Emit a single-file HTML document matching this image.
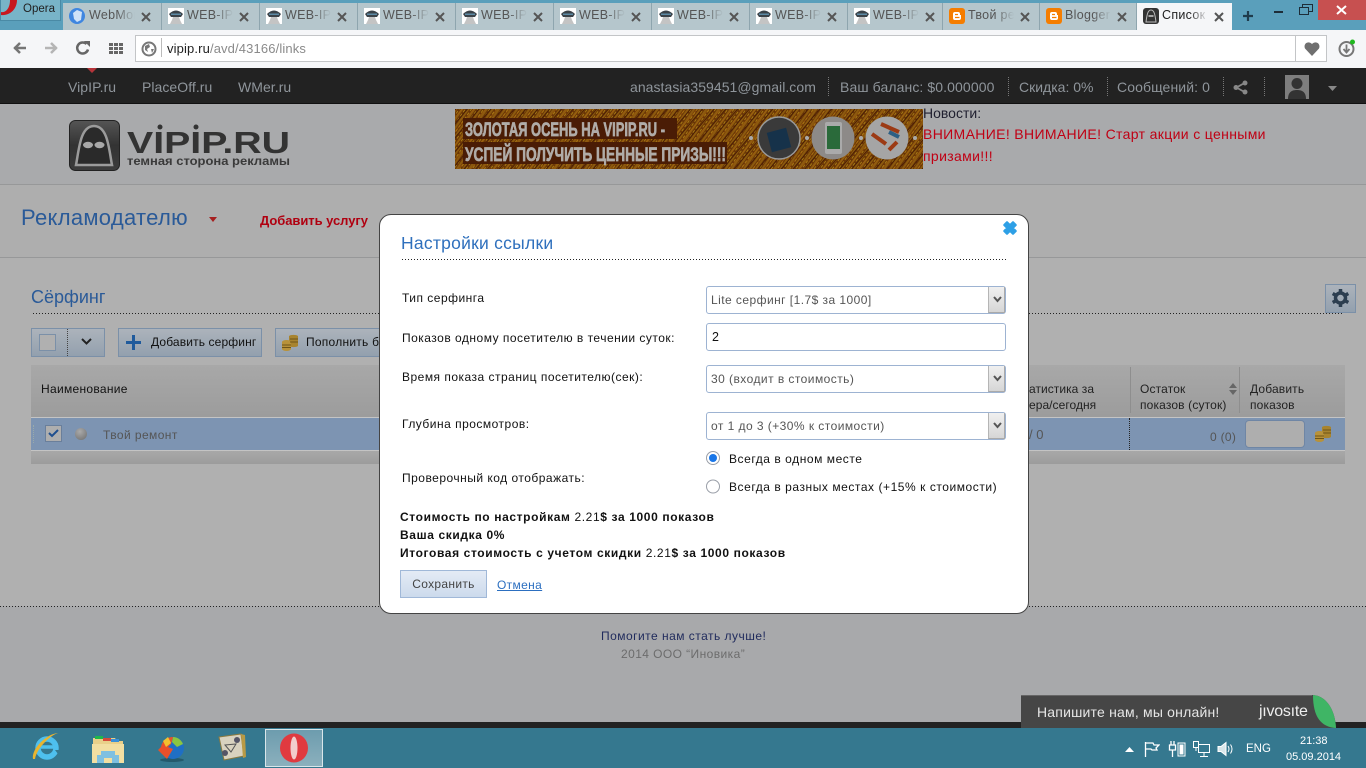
<!DOCTYPE html>
<html lang="ru"><head><meta charset="utf-8"><title>Список ссылок</title>
<style>
*{box-sizing:border-box}
html,body{margin:0;padding:0;width:1366px;height:768px;overflow:hidden;background:#b0b0b0;font-family:"Liberation Sans","Noto Sans CJK SC",sans-serif;font-size:12px;color:#000}
.a{position:absolute;white-space:nowrap}
.tab{position:absolute;top:3px;height:27px;background:#b5c6cc;border-right:1px solid #8ea5ae;overflow:hidden}
.tab .t{position:absolute;left:25px;top:5px;font-size:12.5px;color:#555;letter-spacing:.3px;white-space:nowrap;width:46px;overflow:hidden;-webkit-mask-image:linear-gradient(90deg,#000 60%,transparent);mask-image:linear-gradient(90deg,#000 60%,transparent)}
.tab .x{position:absolute;left:77px;top:9px}
.tab svg.i{position:absolute;left:6px;top:5px}
.nav{font-size:14px;color:#8f959b;top:79px;letter-spacing:.05px}
.sel{position:absolute;left:706px;width:300px;height:28px;background:#fff;border:1px solid #9db3d2;border-radius:3px;font-size:12px;color:#555;padding:6px 0 0 4px;letter-spacing:.45px;white-space:nowrap}
.sel i{position:absolute;right:0;top:0;width:17px;height:26px;background:linear-gradient(#f0f0f0,#d6d6d6);border-left:1px solid #b5b5b5;border-right:1px solid #aaa;border-bottom:1px solid #aaa}
.sel svg{position:absolute;right:3px;top:9px}
.lab{font-size:12px;letter-spacing:.49px;color:#111}
.b{font-size:12px;font-weight:bold;letter-spacing:.62px;color:#111}
.b span{font-weight:normal}
.sep{position:absolute;top:77px;height:19px;border-left:1px dotted #777}
.dot{position:absolute;height:1px;background:repeating-linear-gradient(90deg,#222 0 1px,transparent 1px 3px)}
</style></head><body>

<svg width="0" height="0" style="position:absolute">
<symbol id="web" viewBox="0 0 16 16"><rect width="16" height="16" fill="#fff"/><path d="M1 6Q8 -1 15 6L13 9H3Z" fill="#3a4248"/><path d="M3 5.500h10v1.500H3z" fill="#5d8aa5"/><path d="M5 9h6l1 3 2 4H2l2-4z" fill="#c4c4c4"/></symbol>
<symbol id="xx" viewBox="0 0 10 10"><path d="M1 1l8 8M9 1l-8 8" stroke="#555" stroke-width="2"/></symbol>
<symbol id="blg" viewBox="0 0 16 16"><rect width="16" height="16" rx="3" fill="#f57d00"/><path d="M4 6a2 2 0 0 1 2-2h3a2 2 0 0 1 2 2v1h1v3a2 2 0 0 1-2 2H6a2 2 0 0 1-2-2z" fill="#fff"/><path d="M6 6.500h3M6 9.500h4.500" stroke="#f57d00" stroke-width="1.200"/></symbol>
<symbol id="arr" viewBox="0 0 9 7"><path d="M1 1l3.500 4L8 1" fill="none" stroke="#555" stroke-width="2"/></symbol>
<symbol id="coin" viewBox="0 0 17 17"><path d="M7 2a5 2 0 0 1 9 0v10a5 2 0 0 1-9 0z" fill="#a8842f"/><path d="M0 8a4.500 2 0 0 1 9 0v7a4.500 2 0 0 1-9 0z" fill="#b8923a"/><path d="M8 5h8M8 8h8M0 11h9M0 13.500h9" stroke="#6e5418"/></symbol>
</svg>

<!-- browser chrome -->
<div class="a" style="left:0;top:0;width:1366px;height:30px;background:#5a9fbb"></div>
<div class="a" style="left:0;top:0;width:61px;height:21px;background:#78b4c8;border:1px solid #4a8aa5;border-top:0"></div>
<svg class="a" style="left:0;top:0" width="18" height="16"><path d="M1 12C6 13 10 8 10 0H17C17 9 10 16 1 15Z" fill="#c8171e"/></svg>
<div class="a" style="left:23px;top:3px;font-size:11.5px;color:#222">Opera</div>

<div class="tab" style="left:63px;width:99px">
<svg class="i" width="16" height="16"><circle cx="8" cy="8" r="8" fill="#3f86e0"/><path d="M8 2l5 2-1 8-4 2-3-3-1-6z" fill="#cfe2f8"/></svg><div class="t" style="left:26px">WebMoney</div>
<svg class="x" width="10" height="10" style="left:78px"><use href="#xx"/></svg></div>
<div class="tab" style="left:162px;width:98px"><svg class="i" width="16" height="16"><use href="#web"/></svg><div class="t">WEB-IP.ru</div><svg class="x" width="10" height="10"><use href="#xx"/></svg></div>
<div class="tab" style="left:260px;width:98px"><svg class="i" width="16" height="16"><use href="#web"/></svg><div class="t">WEB-IP.ru</div><svg class="x" width="10" height="10"><use href="#xx"/></svg></div>
<div class="tab" style="left:358px;width:98px"><svg class="i" width="16" height="16"><use href="#web"/></svg><div class="t">WEB-IP.ru</div><svg class="x" width="10" height="10"><use href="#xx"/></svg></div>
<div class="tab" style="left:456px;width:98px"><svg class="i" width="16" height="16"><use href="#web"/></svg><div class="t">WEB-IP.ru</div><svg class="x" width="10" height="10"><use href="#xx"/></svg></div>
<div class="tab" style="left:554px;width:98px"><svg class="i" width="16" height="16"><use href="#web"/></svg><div class="t">WEB-IP.ru</div><svg class="x" width="10" height="10"><use href="#xx"/></svg></div>
<div class="tab" style="left:652px;width:98px"><svg class="i" width="16" height="16"><use href="#web"/></svg><div class="t">WEB-IP.ru</div><svg class="x" width="10" height="10"><use href="#xx"/></svg></div>
<div class="tab" style="left:750px;width:98px"><svg class="i" width="16" height="16"><use href="#web"/></svg><div class="t">WEB-IP.ru</div><svg class="x" width="10" height="10"><use href="#xx"/></svg></div>
<div class="tab" style="left:848px;width:95px"><svg class="i" width="16" height="16"><use href="#web"/></svg><div class="t">WEB-IP.ru</div><svg class="x" width="10" height="10"><use href="#xx"/></svg></div>
<div class="tab" style="left:943px;width:97px"><svg class="i" width="16" height="16"><use href="#blg"/></svg><div class="t">Твой ремонт</div><svg class="x" width="10" height="10"><use href="#xx"/></svg></div>
<div class="tab" style="left:1040px;width:97px"><svg class="i" width="16" height="16"><use href="#blg"/></svg><div class="t">Blogger</div><svg class="x" width="10" height="10"><use href="#xx"/></svg></div>
<div class="tab" style="left:1137px;width:95px;background:#f5f6f8;border:0"><svg class="i" width="16" height="16"><rect width="16" height="16" rx="3" fill="#333"/><path d="M3 14C4 6 5 2 8 2s4 4 5 12z" fill="none" stroke="#bbb"/><path d="M5.500 8h5" stroke="#ccc" stroke-width="1.500"/></svg><div class="t" style="color:#222">Список</div><svg class="x" width="10" height="10"><use href="#xx"/></svg></div>
<svg class="a" style="left:1241px;top:9px" width="14" height="14"><path d="M7 2v10M2 7h10" stroke="#1f3c4c" stroke-width="2.200"/></svg>
<div class="a" style="left:1274px;top:11px;width:9px;height:2px;background:#1d2d38"></div>
<svg class="a" style="left:1299px;top:4px" width="14" height="11"><path d="M0.500 3.500h9v7h-9zM3.500 3.500V0.500h10v7h-4" fill="none" stroke="#1d2d38" stroke-width="1"/></svg>
<div class="a" style="left:1318px;top:0;width:48px;height:20px;background:#c75050"></div>
<svg class="a" style="left:1336px;top:5px" width="11" height="10"><path d="M1 1l9 8M10 1l-9 8" stroke="#fff" stroke-width="2"/></svg>

<div class="a" style="left:0;top:30px;width:1366px;height:38px;background:#f5f6f8"></div>
<svg class="a" style="left:12px;top:40px" width="16" height="16"><path d="M2 8h12M8 3L3 8l5 5" fill="none" stroke="#757575" stroke-width="2.500"/></svg>
<svg class="a" style="left:43px;top:40px" width="16" height="16"><path d="M2 8h12M8 3l5 5-5 5" fill="none" stroke="#b5b5b5" stroke-width="2.500"/></svg>
<svg class="a" style="left:75px;top:40px" width="16" height="16"><path d="M13 9.500A5.500 5.500 0 1 1 11.500 4" fill="none" stroke="#666" stroke-width="2.500"/><path d="M9 1h6v6z" fill="#666"/></svg>
<svg class="a" style="left:109px;top:43px" width="14" height="11" fill="#666"><rect width="4" height="3"/><rect x="5" width="4" height="3"/><rect x="10" width="4" height="3"/><rect y="4" width="4" height="3"/><rect x="5" y="4" width="4" height="3"/><rect x="10" y="4" width="4" height="3"/><rect y="8" width="4" height="3"/><rect x="5" y="8" width="4" height="3"/><rect x="10" y="8" width="4" height="3"/></svg>
<div class="a" style="left:135px;top:35px;width:1192px;height:27px;background:#fff;border:1px solid #c3c5c7"></div>
<div class="a" style="left:1295px;top:36px;height:25px;border-left:1px solid #c3c5c7"></div>
<svg class="a" style="left:141px;top:41px" width="16" height="16"><circle cx="8" cy="8" r="6.500" fill="none" stroke="#777" stroke-width="2"/><path d="M4 5l4-2 1 3-3 2 1 3-3-2zM10 8h3l-2 4z" fill="#777"/></svg>
<div class="a" style="left:161px;top:38px;height:19px;border-left:1px solid #bbb"></div>
<div class="a" style="left:167px;top:41px;font-size:13px;letter-spacing:.13px;color:#8a8a8a"><span style="color:#222">vipip.ru</span>/avd/43166/links</div>
<svg class="a" style="left:1304px;top:41px" width="16" height="15"><path d="M8 15L1 7.500C-1 3 4-1 8 3c4-4 9 0 7 4.500z" fill="#6f6f6f"/></svg>
<svg class="a" style="left:1337px;top:39px" width="20" height="19"><circle cx="9.500" cy="10" r="7" fill="none" stroke="#777" stroke-width="2"/><path d="M9.500 5.500v7M6.500 10l3 3.500 3-3.500" fill="none" stroke="#777" stroke-width="1.800"/><circle cx="15.500" cy="3" r="2.500" fill="#1fb81f"/></svg>

<!-- top dark nav -->
<div class="a" style="left:0;top:68px;width:1366px;height:36px;background:#222;border-bottom:1px solid #111"></div>
<svg class="a" style="left:87px;top:68px" width="10" height="5"><path d="M0 0h10L5 5z" fill="#b5343a"/></svg>
<div class="a nav" style="left:68px">VipIP.ru</div>
<div class="a nav" style="left:142px">PlaceOff.ru</div>
<div class="a nav" style="left:238px">WMer.ru</div>
<div class="a nav" style="left:630px">anastasia359451@gmail.com</div>
<div class="a nav" style="left:840px;letter-spacing:.1px">Ваш баланс: $0.000000</div>
<div class="a nav" style="left:1019px;letter-spacing:0">Скидка: 0%</div>
<div class="a nav" style="left:1117px;letter-spacing:.1px">Сообщений: 0</div>
<div class="sep" style="left:828px"></div><div class="sep" style="left:1008px"></div><div class="sep" style="left:1107px"></div><div class="sep" style="left:1223px"></div><div class="sep" style="left:1264px"></div>
<svg class="a" style="left:1233px;top:80px" width="15" height="15"><path d="M11.500 3L3.500 7.500l8 4.500" fill="none" stroke="#888" stroke-width="1.800"/><circle cx="12" cy="3" r="2.500" fill="#888"/><circle cx="3" cy="7.500" r="2.500" fill="#888"/><circle cx="12" cy="12" r="2.500" fill="#888"/></svg>
<svg class="a" style="left:1285px;top:75px" width="24" height="24"><rect width="24" height="24" fill="#7e7e7e"/><circle cx="12" cy="8.500" r="5.500" fill="#333"/><path d="M3 24c0-7 4-9 9-9s9 2 9 9z" fill="#333"/></svg>
<svg class="a" style="left:1328px;top:86px" width="9" height="5"><path d="M0 0h9L4.500 5z" fill="#888"/></svg>

<!-- page -->
<div class="a" style="left:0;top:104px;width:1366px;height:81px;background:#a9aaac;border-bottom:1px solid #979899"></div>
<div class="a" style="left:0;top:185px;width:1366px;height:73px;background:#aeaeae;border-bottom:1px solid #979899"></div>
<div class="a" style="left:0;top:258px;width:1366px;height:348px;background:#b0b0b0"></div>
<div class="a" style="left:0;top:606px;width:1366px;height:116px;background:#a8a9ab"></div>
<div class="dot" style="left:0;top:606px;width:1366px"></div>

<svg class="a" style="left:68px;top:120px" width="224" height="52" viewBox="0 0 224 52">
<defs><linearGradient id="lg" x1="0" y1="0" x2="0" y2="1"><stop offset="0" stop-color="#555"/><stop offset=".5" stop-color="#333"/><stop offset="1" stop-color="#3c3c3c"/></linearGradient></defs>
<rect x="1.500" y="0.500" width="50" height="50" rx="6" fill="url(#lg)" stroke="#222"/>
<path d="M8 45C11 30 12 6 26 6s15 24 18 39z" fill="#2a2a2a" stroke="#9b9b9b" stroke-width="2.500"/>
<ellipse cx="20" cy="25" rx="5" ry="3.200" fill="#a8a8a8"/><ellipse cx="31.500" cy="25" rx="5" ry="3.200" fill="#a8a8a8"/>
<text x="59" y="33" font-family="Liberation Sans" font-weight="bold" font-size="31" fill="#333" textLength="163" lengthAdjust="spacingAndGlyphs">VIPIP.RU</text>
<circle cx="92" cy="7" r="2.500" fill="#333"/><circle cx="128" cy="7" r="2.500" fill="#333"/>
<text x="59" y="45" font-family="Liberation Sans" font-weight="bold" font-size="11.500" fill="#3a3a3a" textLength="163" lengthAdjust="spacingAndGlyphs">темная сторона рекламы</text>
</svg>

<svg class="a" style="left:455px;top:109px" width="468" height="60" viewBox="0 0 468 60">
<defs><pattern id="p" width="5" height="5" patternUnits="userSpaceOnUse" patternTransform="rotate(35)"><rect width="5" height="5" fill="#6a3506"/><rect width="2" height="5" fill="#8c5a0e"/><rect x="3" y="0" width="1" height="3" fill="#a67c14"/></pattern>
<pattern id="q" width="9" height="9" patternUnits="userSpaceOnUse" patternTransform="rotate(-50)"><rect width="9" height="1" fill="#4a1d04"/><rect y="5" width="9" height="1" fill="#a8650f" opacity=".6"/></pattern></defs>
<rect width="468" height="60" fill="url(#p)"/><rect width="468" height="60" fill="url(#q)"/>
<rect x="8" y="9" width="214" height="21" fill="#4a1c05"/><rect x="8" y="33" width="264" height="22" fill="#4a1c05"/>
<g font-family="Liberation Sans" font-weight="bold" fill="#b0aca8" stroke="#b0aca8" stroke-width=".7" font-size="19">
<text x="10" y="27" textLength="200" lengthAdjust="spacingAndGlyphs">ЗОЛОТАЯ ОСЕНЬ НА VIPIP.RU -</text>
<text x="10" y="52" textLength="261" lengthAdjust="spacingAndGlyphs">УСПЕЙ ПОЛУЧИТЬ ЦЕННЫЕ ПРИЗЫ!!!</text></g>
<circle cx="296" cy="29" r="2" fill="#aaa"/><circle cx="352" cy="29" r="2" fill="#aaa"/><circle cx="406" cy="29" r="2" fill="#aaa"/><circle cx="460" cy="29" r="2" fill="#aaa"/>
<circle cx="324" cy="29" r="21" fill="#3a3a3a" stroke="#999" stroke-width="1.500"/><rect x="314" y="21" width="20" height="20" fill="#16324a" transform="rotate(-15 324 31)"/>
<circle cx="378" cy="29" r="21.500" fill="#8d8a88"/><rect x="370" y="13" width="17" height="32" rx="2" fill="#aaa"/><rect x="372" y="17" width="13" height="23" fill="#2a6a3a"/>
<circle cx="432" cy="29" r="21.500" fill="#a5a5a5"/><path d="M417 25l14 10M426 15l18 8M442 33l-8 8" stroke="#9c3a14" stroke-width="4"/><path d="M434 23l10 5" stroke="#2d5f84" stroke-width="4"/>
</svg>

<div class="a" style="left:923px;top:105px;font-size:14px;color:#1f1f2f">Новости:</div>
<div class="a" style="left:923px;top:123px;font-size:14px;line-height:22px;letter-spacing:.35px;color:#c00014;white-space:normal;width:350px">ВНИМАНИЕ! ВНИМАНИЕ! Старт акции с ценными призами!!!</div>

<div class="a" style="left:21px;top:205px;font-size:22px;letter-spacing:.3px;color:#2a5a98">Рекламодателю</div>
<svg class="a" style="left:209px;top:217px" width="8" height="5"><path d="M0 0h8L4 5z" fill="#a62020"/></svg>
<div class="a" style="left:260px;top:213px;font-size:13px;font-weight:bold;letter-spacing:-.05px;color:#b00010">Добавить услугу</div>

<div class="a" style="left:31px;top:287px;font-size:18px;color:#2a5a98">Сёрфинг</div>
<div class="dot" style="left:33px;top:313px;width:1310px"></div>

<div class="a" style="left:31px;top:328px;width:74px;height:29px;background:linear-gradient(#acb3bb,#93a0ae);border:1px solid #7b90a8"></div>
<div class="a" style="left:39px;top:334px;width:17px;height:17px;background:#b0b0b0;border:1px solid #7b90a8"></div>
<div class="a" style="left:67px;top:329px;height:27px;border-left:1px dotted #444"></div>
<svg class="a" style="left:81px;top:338px" width="11" height="8"><path d="M1 1l4.500 4.500L10 1" fill="none" stroke="#222" stroke-width="2"/></svg>
<div class="a" style="left:118px;top:328px;width:144px;height:29px;background:linear-gradient(#acb3bb,#93a0ae);border:1px solid #7b90a8"></div>
<svg class="a" style="left:126px;top:335px" width="15" height="15"><path d="M7.500 0v15M0 7.500h15" stroke="#1f5a9c" stroke-width="3"/></svg>
<div class="a" style="left:151px;top:335px;color:#111;letter-spacing:.13px">Добавить серфинг</div>
<div class="a" style="left:275px;top:328px;width:110px;height:29px;background:linear-gradient(#acb3bb,#93a0ae);border:1px solid #7b90a8"></div>
<svg class="a" style="left:282px;top:334px" width="17" height="17"><use href="#coin"/></svg>
<div class="a" style="left:306px;top:335px;color:#111;letter-spacing:.25px">Пополнить б</div>

<div class="a" style="left:1325px;top:284px;width:31px;height:29px;background:linear-gradient(#acb3bb,#93a0ae);border:1px solid #7b90a8"></div>
<svg class="a" style="left:1332px;top:289px" width="17" height="18" viewBox="0 0 17 18"><circle cx="8.500" cy="9" r="5" fill="none" stroke="#2c3e50" stroke-width="3.500"/><path d="M8.500 0v4M8.500 14v4M0.700 4.500l3.500 2M12.800 11.500l3.500 2M0.700 13.500l3.500-2M12.800 6.500l3.500-2" stroke="#2c3e50" stroke-width="3.500"/></svg>

<div class="a" style="left:31px;top:365px;width:1314px;height:53px;background:linear-gradient(#a8a8a8,#9c9c9c);border-bottom:1px solid #c4c4c4"></div>
<div class="a" style="left:41px;top:382px;color:#111;letter-spacing:.3px">Наименование</div>
<div class="a" style="left:1029px;top:381px;color:#222;line-height:16px;letter-spacing:.05px">атистика за<br>ера/сегодня</div>
<div class="a" style="left:1130px;top:367px;height:46px;border-left:1px solid #8e8e8e"></div>
<div class="a" style="left:1239px;top:367px;height:46px;border-left:1px solid #8e8e8e"></div>
<div class="a" style="left:1140px;top:381px;color:#222;line-height:16px;letter-spacing:.15px">Остаток<br>показов (суток)</div>
<svg class="a" style="left:1229px;top:382px" width="8" height="14"><path d="M0 6l4-5 4 5zM0 8h8l-4 5z" fill="#666"/></svg>
<div class="a" style="left:1250px;top:381px;color:#222;line-height:16px;letter-spacing:.15px">Добавить<br>показов</div>

<div class="a" style="left:31px;top:418px;width:1314px;height:33px;background:#7d94b2;border-bottom:1px solid #c4c4c4"></div>
<div class="a" style="left:33px;top:425px;width:3px;height:18px;border-left:1px dotted #9aa;"></div>
<div class="a" style="left:45px;top:425px;width:17px;height:17px;background:#aeaeae;border:1px solid #6a7f9b"></div>
<svg class="a" style="left:48px;top:429px" width="11" height="9"><path d="M1 4l3 3 6-6" fill="none" stroke="#1f4f8f" stroke-width="2"/></svg>
<div class="a" style="left:75px;top:428px;width:12px;height:12px;border-radius:50%;background:radial-gradient(circle at 40% 30%,#aaa,#6d6d6d)"></div>
<div class="a" style="left:103px;top:428px;color:#555;letter-spacing:.42px">Твой ремонт</div>
<div class="a" style="left:1029px;top:427px;font-size:13px;color:#555">/ 0</div>
<div class="a" style="left:1129px;top:418px;height:32px;border-left:1px dotted #222"></div>
<div class="a" style="left:1210px;top:430px;color:#555;letter-spacing:.3px">0 (0)</div>
<div class="a" style="left:1245px;top:420px;width:60px;height:28px;background:#aeaeae;border:1px solid #6f86a5;border-radius:4px"></div>
<svg class="a" style="left:1315px;top:425px" width="17" height="17"><use href="#coin"/></svg>
<div class="a" style="left:31px;top:451px;width:1314px;height:13px;background:linear-gradient(#a8a8a8,#9c9c9c)"></div>

<!-- footer -->
<div class="a" style="left:601px;top:629px;letter-spacing:.48px;color:#1f2a5c">Помогите нам стать лучше!</div>
<div class="a" style="left:621px;top:647px;letter-spacing:.42px;color:#6c6c6c">2014 ООО “Иновика”</div>

<!-- modal -->
<div class="a" style="left:379px;top:214px;width:650px;height:400px;background:#fff;border:1px solid #444;border-radius:12px"></div>
<svg class="a" style="left:1002px;top:220px" width="16" height="16"><path d="M2.500 5L5 2.500 8 5.500l3-3L13.500 5 10.500 8l3 3L11 13.500l-3-3-3 3L2.500 11l3-3z" fill="#2ea0e6" stroke="#2ea0e6" stroke-width="2.500" stroke-linejoin="round"/></svg>
<div class="a" style="left:401px;top:233px;font-size:17.500px;letter-spacing:.25px;color:#2f70bd">Настройки ссылки</div>
<div class="dot" style="left:402px;top:259px;width:606px"></div>
<div class="a lab" style="left:402px;top:291px">Тип серфинга</div>
<div class="a lab" style="left:402px;top:331px">Показов одному посетителю в течении суток:</div>
<div class="a lab" style="left:402px;top:370px">Время показа страниц посетителю(сек):</div>
<div class="a lab" style="left:402px;top:417px">Глубина просмотров:</div>
<div class="a lab" style="left:402px;top:471px">Проверочный код отображать:</div>

<div class="sel" style="top:286px">Lite серфинг [1.7$ за 1000]<i></i><svg width="9" height="7"><use href="#arr"/></svg></div>
<div class="sel" style="top:323px;color:#111;font-size:12.500px;padding-left:5px">2</div>
<div class="sel" style="top:365px">30 (входит в стоимость)<i></i><svg width="9" height="7"><use href="#arr"/></svg></div>
<div class="sel" style="top:412px">от 1 до 3 (+30% к стоимости)<i></i><svg width="9" height="7"><use href="#arr"/></svg></div>

<svg class="a" style="left:705px;top:450px" width="16" height="44"><circle cx="8" cy="8" r="6.500" fill="#fff" stroke="#9a9fa8"/><circle cx="8" cy="8" r="4" fill="#1976e8"/><circle cx="8" cy="36.500" r="6.500" fill="#fff" stroke="#9a9fa8"/></svg>
<div class="a lab" style="left:729px;top:452px;letter-spacing:.55px">Всегда в одном месте</div>
<div class="a lab" style="left:729px;top:480px;letter-spacing:.55px">Всегда в разных местах (+15% к стоимости)</div>

<div class="a b" style="left:400px;top:510px">Стоимость по настройкам <span>2.21</span>$ за 1000 показов</div>
<div class="a b" style="left:400px;top:528px">Ваша скидка 0%</div>
<div class="a b" style="left:400px;top:546px">Итоговая стоимость с учетом скидки <span>2.21</span>$ за 1000 показов</div>
<div class="a" style="left:400px;top:570px;width:87px;height:28px;background:linear-gradient(#e4ebf5,#ccdaec);border:1px solid #a0b8d8;color:#444;font-size:12px;text-align:center;line-height:27px;letter-spacing:.32px">Сохранить</div>
<div class="a" style="left:497px;top:578px;color:#2c6fc0;text-decoration:underline;letter-spacing:.35px">Отмена</div>

<!-- taskbar -->
<div class="a" style="left:0;top:722px;width:1366px;height:6px;background:#222"></div>
<div class="a" style="left:0;top:728px;width:1366px;height:40px;background:#35788f"></div>
<svg class="a" style="left:30px;top:731px" width="32" height="32" viewBox="0 0 32 32"><ellipse cx="17" cy="17" rx="9" ry="9" fill="none" stroke="#4ec0ee" stroke-width="5.500"/><path d="M10 16h15" stroke="#4ec0ee" stroke-width="3.500"/><path d="M25 19h6l-3 4z" fill="#35788f"/><path d="M3 28C1 18 17 2 29 2c-6 0-22 14-24 26z" fill="#e8b530"/></svg>
<svg class="a" style="left:91px;top:734px" width="34" height="30" viewBox="0 0 34 30"><path d="M2 4h22l2 3h6v22H2z" fill="#e9d08a"/><rect x="4" y="2" width="8" height="3" fill="#1fb84a"/><rect x="12" y="4" width="8" height="3" fill="#d64a3a"/><rect x="20" y="5" width="8" height="3" fill="#3a90d8"/><rect x="1" y="10" width="32" height="19" fill="#f2dfa2"/><path d="M6 29v-8h4v-4h14v4h4v8h-7v-5h-8v5z" fill="#7fc0e0"/></svg>
<svg class="a" style="left:155px;top:733px" width="32" height="30" viewBox="0 0 32 30"><ellipse cx="17" cy="27" rx="12" ry="2" fill="#245a6c"/><circle cx="18" cy="15" r="11" fill="#1f6fc4"/><path d="M18 4a11 11 0 0 1 10 7l-6 3-5-5z" fill="#8bc53f"/><path d="M6 14C7 8 12 4 18 4l-2 7-3 3 5 2-6 10-9-9z" fill="#e8502a"/><path d="M8 8l5-4 3 6-5 4z" fill="#f2c12e"/></svg>
<svg class="a" style="left:217px;top:732px" width="30" height="30" viewBox="0 0 30 30"><path d="M2 5l22-3 3 22-20 4z" fill="#d8d2bf" stroke="#8a7a40"/><path d="M24 2l4 1 1 22-3 1z" fill="#b89a45"/><path d="M8 13l11-1-5 8z" fill="none" stroke="#555"/><circle cx="20" cy="8" r="3" fill="#556"/><circle cx="8" cy="21" r="3" fill="#556"/></svg>
<div class="a" style="left:265px;top:729px;width:58px;height:38px;background:linear-gradient(#6d9cae,#8bb0bd);border:1px solid #d9e6ea"></div>
<svg class="a" style="left:279px;top:733px" width="30" height="30" viewBox="0 0 30 30"><ellipse cx="15" cy="15" rx="14" ry="14.500" fill="#e03a40"/><ellipse cx="15" cy="15" rx="3.500" ry="11.500" fill="#f2cdcd"/></svg>

<!-- jivosite -->
<div class="a" style="left:1021px;top:695px;width:292px;height:33px;background:#464646;border-top:1px solid #666"></div>
<svg class="a" style="left:1312px;top:695px" width="25" height="33"><path d="M1 0C14 1 23 14 24 33L0 33V0Z" fill="#464646"/><path d="M1 0C14 1 23 14 24 33 9 32 1 22 1 0Z" fill="#3fb565"/></svg>
<div class="a" style="left:1037px;top:704px;font-size:14px;letter-spacing:.2px;color:#e6e6e6">Напишите нам, мы онлайн!</div>
<div class="a" style="left:1259px;top:703px;font-size:16px;letter-spacing:-.25px;color:#eee">jıvosıte</div>

<!-- tray -->
<svg class="a" style="left:1125px;top:747px" width="9" height="5"><path d="M0 5L4.500 0 9 5z" fill="#fff"/></svg>
<svg class="a" style="left:1144px;top:741px" width="16" height="16"><path d="M1.500 1v15M2 2h7l1 2h5l-3 3 1 2H8L7 8H2" fill="none" stroke="#fff" stroke-width="1.300"/></svg>
<svg class="a" style="left:1168px;top:741px" width="18" height="16"><path d="M3 0v4M6 0v4M1.500 4h6v5h-6zM4.500 9v7" stroke="#fff" stroke-width="1.300" fill="none"/><rect x="10" y="2" width="7" height="13" fill="none" stroke="#fff"/><rect x="11.500" y="3.500" width="4" height="10" fill="#fff"/></svg>
<svg class="a" style="left:1192px;top:741px" width="18" height="16" fill="none" stroke="#fff"><rect x="6.500" y="3.500" width="11" height="8"/><rect x="1.500" y="0.500" width="5" height="6"/><path d="M4 7v3M12 12v3M8 15.500h8"/></svg>
<svg class="a" style="left:1217px;top:741px" width="18" height="16" fill="none" stroke="#fff"><path d="M1 5.500h3L9 1.500v13L4 10.500H1z" fill="#d8e6ea"/><path d="M11 5q2 3 0 6M13.500 3.500q3 4.500 0 9"/></svg>
<div class="a" style="left:1246px;top:743px;font-size:11.500px;color:#fff">ENG</div>
<div class="a" style="left:1300px;top:735px;font-size:11px;color:#fff">21:38</div>
<div class="a" style="left:1286px;top:751px;font-size:11px;color:#fff">05.09.2014</div>
</body></html>
